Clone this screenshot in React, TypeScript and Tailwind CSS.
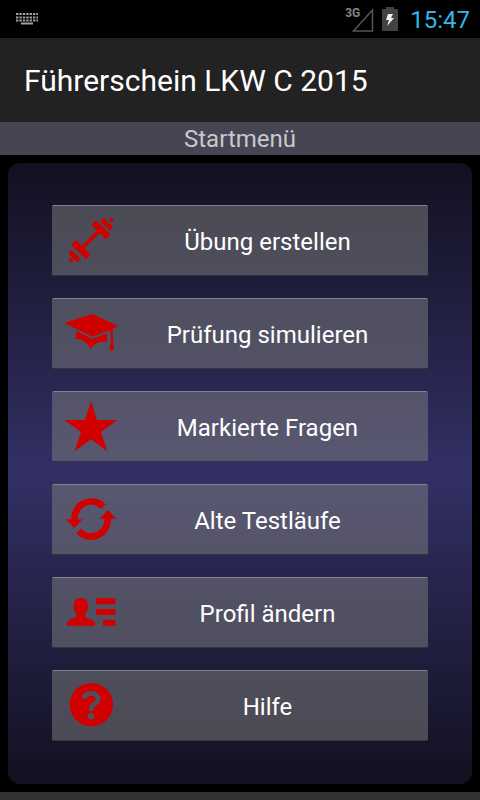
import type { ReactNode } from "react";

const DumbbellIcon = () => (
  <g stroke="#d00000" fill="none">
    <path d="M92 148 152 89" strokeWidth="11" />
    <path d="M71 127 115 171" strokeWidth="20" />
    <path d="M131 68 174 111" strokeWidth="20" />
    <path d="M60 155 87 182" strokeWidth="15" />
    <path d="M156 59 185 87" strokeWidth="15" />
    <path d="M58 180 63 175 68 180 63 185z" fill="#d00000" strokeWidth="4" />
    <path d="M179 60 184 55 189 60 184 65z" fill="#d00000" strokeWidth="4" />
  </g>
);

const CapIcon = () => (
  <g fill="#d00000">
    <path d="M43 90 126 63 205 99 189 107C186 123 192 149 191 169Q185 175 179 173V164C186 145 184 122 178 112L127 131z" />
    <path d="M80 114 127 138 171 121V147Q154 144 142 150 130 156 122 167 114 153 104 146 92 137 76 138z" />
  </g>
);

const StarIcon = () => (
  <path
    d="M123 45 141 102H203L153 138 172 196 123 160 74 196 93 138 43 102H105z"
    fill="#d00000"
  />
);

const RefreshIcon = () => (
  <g>
    <path
      d="M160 83A50 50 0 0 0 74 122M86 156A50 50 0 0 0 173 118"
      fill="none"
      stroke="#d00000"
      strokeWidth="20"
    />
    <path d="M47 121H98L73 147z" fill="#d00000" />
    <path d="M148 119H199L174 93z" fill="#d00000" />
  </g>
);

const ProfileIcon = () => (
  <g fill="#d00000">
    <path d="M92 78C107 78 114 87 114 101 114 113 111 121 105 126V135C117 141 135 143 135 156V161H51V156C51 143 68 141 79 135V126C74 121 71 113 71 101 71 87 78 78 92 78z" />
    <path d="M138 79H196V97H138zM138 111H196V129H138zM159 143H196V161H159z" />
  </g>
);

const HelpIcon = () => (
  <g>
    <circle cx="124" cy="119" r="65" fill="#d00000" />
    <path
      d="M102 100Q104 85 124 85 144 86 144 102 144 111 133 117 123 123 123 139"
      fill="none"
      stroke="#514f5d"
      strokeWidth="14"
    />
    <circle cx="123" cy="154" r="10" fill="#514f5d" />
  </g>
);

const menuItems: { label: string; icon: ReactNode }[] = [
  { label: "Übung erstellen", icon: <DumbbellIcon /> },
  { label: "Prüfung simulieren", icon: <CapIcon /> },
  { label: "Markierte Fragen", icon: <StarIcon /> },
  { label: "Alte Testläufe", icon: <RefreshIcon /> },
  { label: "Profil ändern", icon: <ProfileIcon /> },
  { label: "Hilfe", icon: <HelpIcon /> },
];

const StatusBar = () => (
  <div className="flex h-[38px] items-center justify-between bg-black pr-2.5 pl-4">
    <svg width="22" height="12" viewBox="0 0 22 12" fill="none" stroke="#a0a0a0">
      <path d="M0 1H22M0 4.5H22M0 7.5H22" strokeWidth="2" strokeDasharray="2.4 1" />
      <path d="M5 10.5H17" strokeWidth="2" />
    </svg>
    <div className="flex items-center">
      <div className="flex items-start">
        <span className="text-xs leading-3 font-bold text-[#858585]">3G</span>
        <svg className="-ml-2" width="22" height="25" viewBox="0 0 22 25">
          <path d="M1.5 24 20.5 3V24z" fill="none" stroke="#555555" strokeWidth="1.5" />
        </svg>
      </div>
      <svg className="ml-2" width="16" height="24" viewBox="0 0 16 24">
        <path d="M4 0H12V2H16V24H0V2H4z" fill="#424242" />
        <path d="M6 7H11L9 11H12L5 19 7 13H4z" fill="#f0f0f0" />
      </svg>
      <time className="ml-3 pt-0.5 text-2xl text-[#33b5e5]">15:47</time>
    </div>
  </div>
);

const MenuButton = ({ label, icon }: { label: string; icon: ReactNode }) => (
  <button
    type="button"
    className="flex h-[71px] w-full items-center rounded-xs border-t border-b border-t-[#85838f] border-b-[#34333e] bg-[#808080]/50 pr-4 pl-[7px] text-white"
  >
    <svg className="mb-0.5 shrink-0" width="64" height="64" viewBox="27 24 192 192" aria-hidden="true">
      {icon}
    </svg>
    <span className="flex-1 pt-0.5 text-center text-2xl">{label}</span>
  </button>
);

const App = () => {
  return (
    <div className="flex min-h-screen flex-col bg-black font-['Roboto',sans-serif]">
      <StatusBar />
      <header>
        <div className="flex h-21 items-center bg-[#222222] px-6">
          <h1 className="text-[30px] text-white">Führerschein LKW C 2015</h1>
        </div>
        <h2 className="bg-[#474554] pt-0.5 text-center text-2xl leading-[31px] text-[#c8c8cc]">
          Startmenü
        </h2>
      </header>

      <main className="flex-1 p-2">
        <nav className="flex h-full flex-col gap-[22px] rounded-xl bg-linear-to-b from-[#121121] via-[#333066] to-[#121121] px-11 pt-[42px] pb-[43px]">
          {menuItems.map((item) => (
            <MenuButton key={item.label} label={item.label} icon={item.icon} />
          ))}
        </nav>
      </main>
      <footer className="h-2 bg-[#333333]" />
    </div>
  );
};

export default App;
